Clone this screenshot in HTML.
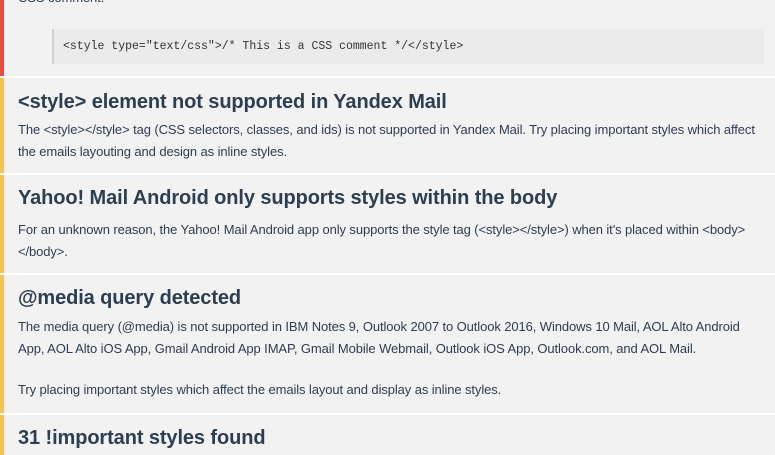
<!DOCTYPE html>
<html><head><meta charset="utf-8"><style>
*{margin:0;padding:0;box-sizing:border-box}
body{width:775px;height:450px;overflow:hidden;background:#f2f2f2;font-family:"Liberation Sans",sans-serif;color:#2c3e50;position:relative}
.sec{position:absolute;left:0;width:775px;border-left:4px solid #f7c34f}
.sep{position:absolute;left:0;width:775px;height:2px;background:#fff}
h2{position:absolute;left:14px;font-size:20px;font-weight:bold;white-space:nowrap;letter-spacing:-0.1px}
p{position:absolute;left:14px;font-size:13px;line-height:22px;width:745px;letter-spacing:-0.1px}
code{position:absolute;left:48px;top:29px;width:712px;height:35px;background:#ebebeb;border-left:2px solid #d0d0d0;font-family:"Liberation Mono",monospace;font-size:11.5px;line-height:35px;padding-left:9px;color:#333}
</style></head><body>
<div class="sec" style="top:0;height:76px;border-left-color:#e74c3c">
<p style="top:-13px">CSS comment.</p>
<code>&lt;style type="text/css"&gt;/* This is a CSS comment */&lt;/style&gt;</code>
</div>
<div class="sep" style="top:76px"></div>
<div class="sec" style="top:78px;height:95px">
<h2 style="top:13px">&lt;style&gt; element not supported in Yandex Mail</h2>
<p style="top:41px">The &lt;style&gt;&lt;/style&gt; tag (CSS selectors, classes, and ids) is not supported in Yandex Mail. Try placing important styles which affect the emails layouting and design as inline styles.</p>
</div>
<div class="sep" style="top:173px"></div>
<div class="sec" style="top:175px;height:98px">
<h2 style="top:12px">Yahoo! Mail Android only supports styles within the body</h2>
<p style="top:44px">For an unknown reason, the Yahoo! Mail Android app only supports the style tag (&lt;style&gt;&lt;/style&gt;) when it's placed within &lt;body&gt;&lt;/body&gt;.</p>
</div>
<div class="sep" style="top:273px"></div>
<div class="sec" style="top:275px;height:138px">
<h2 style="top:12px">@media query detected</h2>
<p style="top:41px">The media query (@media) is not supported in IBM Notes 9, Outlook 2007 to Outlook 2016, Windows 10 Mail, AOL Alto Android App, AOL Alto iOS App, Gmail Android App IMAP, Gmail Mobile Webmail, Outlook iOS App, Outlook.com, and AOL Mail.</p>
<p style="top:104px">Try placing important styles which affect the emails layout and display as inline styles.</p>
</div>
<div class="sep" style="top:413px"></div>
<div class="sec" style="top:415px;height:40px">
<h2 style="top:12px">31 !important styles found</h2>
</div>
</body></html>
